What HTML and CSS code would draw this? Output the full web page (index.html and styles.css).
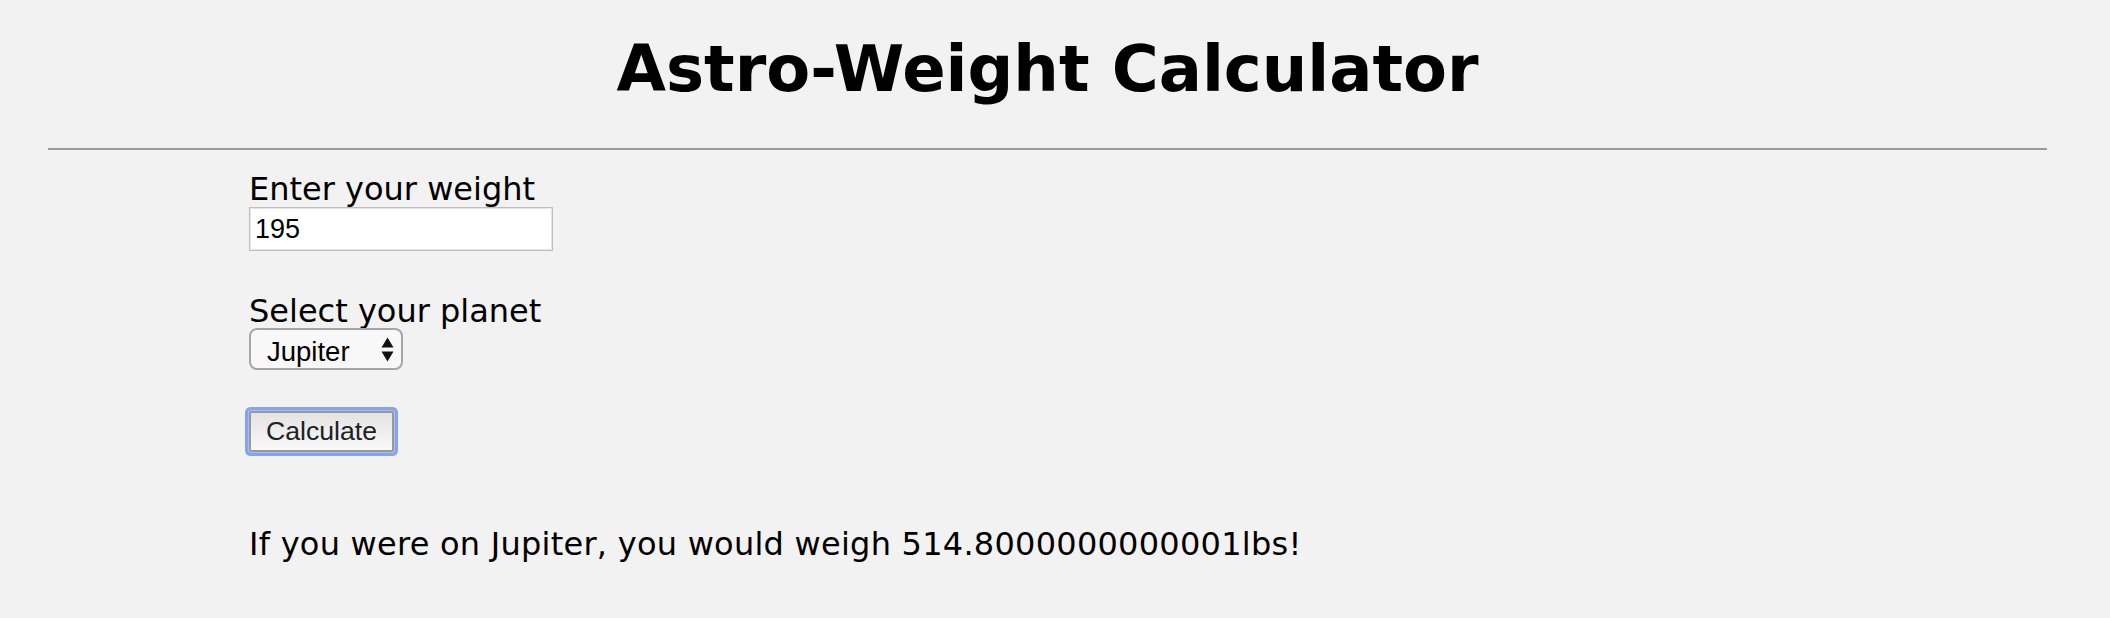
FILE: index.html
```html
<!DOCTYPE html>
<html lang="en">
<head>
<meta charset="utf-8">
<title>Astro-Weight Calculator</title>
<link rel="stylesheet" href="styles.css">
</head>
<body>
<div class="page">
  <h1 class="title">Astro-Weight Calculator</h1>
  <hr class="divider">
  <form class="calc">
    <label class="field-label" for="weight">Enter your weight</label>
    <input class="weight-input" id="weight" type="text" value="195">
    <label class="field-label field-label--gap" for="planet">Select your planet</label>
    <div class="select-wrap">
      <select class="planet-select" id="planet">
        <option>Mercury</option>
        <option>Venus</option>
        <option>Earth</option>
        <option>Mars</option>
        <option selected>Jupiter</option>
        <option>Saturn</option>
        <option>Uranus</option>
        <option>Neptune</option>
      </select>
      <svg class="select-arrows" width="13" height="25" viewBox="0 0 13 25" aria-hidden="true">
        <polygon points="6.5,0.5 12.5,10.5 0.5,10.5" fill="#111"/>
        <polygon points="0.5,14.5 12.5,14.5 6.5,24.5" fill="#111"/>
      </svg>
    </div>
    <button class="calc-button" type="button">Calculate</button>
    <p class="result">If you were on Jupiter, you would weigh 514.8000000000001lbs!</p>
  </form>
</div>
</body>
</html>
```

FILE: styles.css
```css
html, body {
  margin: 0;
  padding: 0;
  background: #f2f2f2;
}

body {
  font-family: "DejaVu Sans", Verdana, sans-serif;
  color: #000;
}

.page {
  width: 2095px;
}

.title {
  margin: 0;
  padding-top: 29px;
  font-size: 64px;
  line-height: 80px;
  font-weight: bold;
  text-align: center;
}

.divider {
  height: 0;
  margin: 39px 48px 0;
  border: 0;
  border-top: 2px solid #9a9a9a;
}

.calc {
  display: flex;
  flex-direction: column;
  align-items: flex-start;
  padding: 21px 0 0 249px;
  margin: 0;
}

.field-label {
  display: block;
  font-size: 32px;
  line-height: 36px;
}

.field-label--gap {
  margin-top: 42px;
}

.weight-input {
  box-sizing: border-box;
  width: 304px;
  height: 44px;
  margin: 0;
  padding: 0 5px;
  border: 1px solid #bdbdbd;
  box-shadow: inset 0 0 0 1px #e6e6e6;
  background: #fff;
  font-family: "Liberation Sans", Arial, sans-serif;
  font-size: 27px;
  color: #000;
  outline: none;
}

.select-wrap {
  position: relative;
  width: 154px;
  height: 42px;
  margin-top: -1px;
}

.planet-select {
  -webkit-appearance: none;
  appearance: none;
  box-sizing: border-box;
  width: 154px;
  height: 42px;
  margin: 0;
  padding: 5px 0 0 16px;
  border: 2px solid #a6a6a6;
  border-radius: 8px;
  background: #f8f8f8;
  font-family: "Liberation Sans", Arial, sans-serif;
  font-size: 27.5px;
  color: #000;
  outline: none;
}

.select-arrows {
  position: absolute;
  left: 132px;
  top: 9px;
  pointer-events: none;
}

.calc-button {
  box-sizing: border-box;
  width: 145px;
  height: 41px;
  margin: 41px 0 0;
  padding: 0;
  border: 2px solid #9a9a9a;
  border-radius: 2px;
  background: linear-gradient(#e3e3e3, #f9f9f9);
  box-shadow: 0 0 0 1px #a8bcf2, 0 0 0 4px #86a4ee;
  font-family: "Liberation Sans", Arial, sans-serif;
  font-size: 26.67px;
  color: #222;
  line-height: 37px;
}

.result {
  margin: 74px 0 0;
  font-size: 32px;
  line-height: 36px;
  letter-spacing: 0.25px;
}
```
